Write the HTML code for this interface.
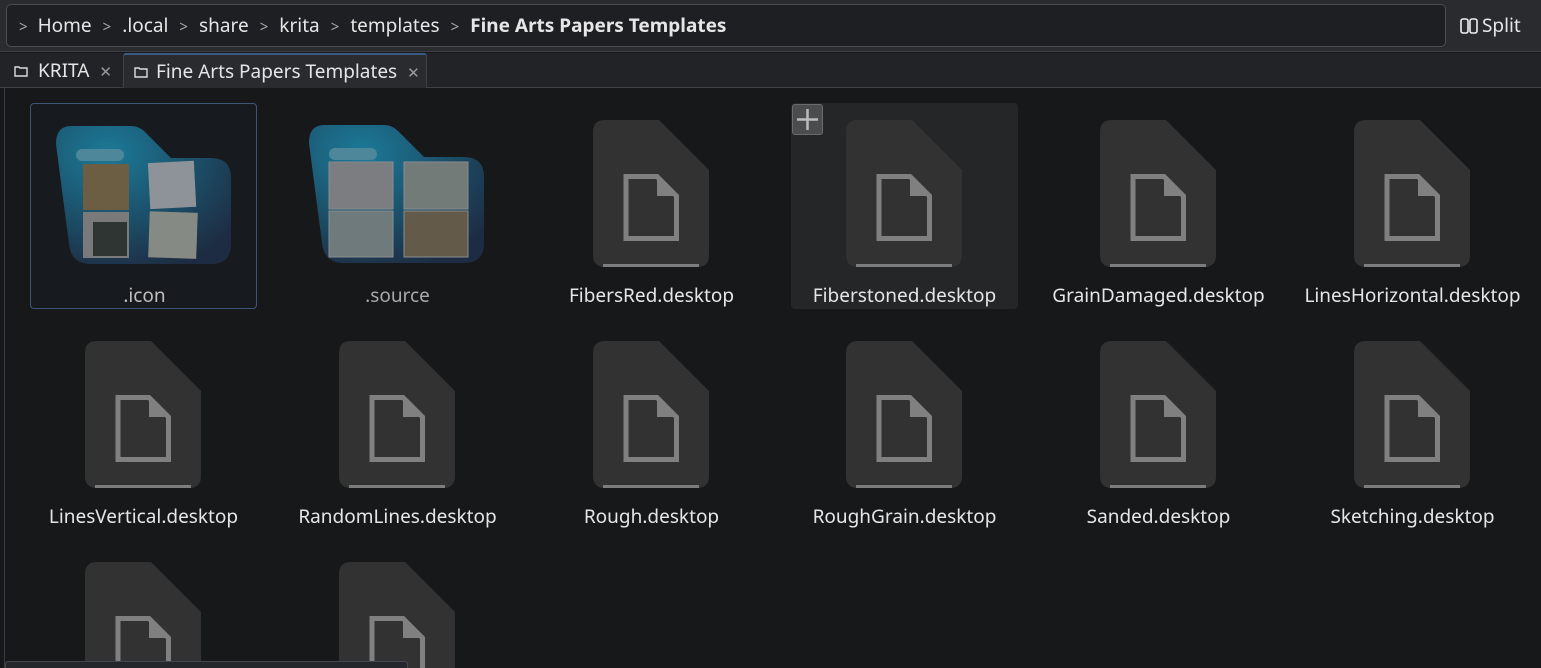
<!DOCTYPE html>
<html><head><meta charset="utf-8"><style>
*{margin:0;padding:0;box-sizing:border-box}
html{width:1541px;height:668px;overflow:hidden}
body{width:1541px;height:668px;overflow:hidden;background:#17181a;font-family:"Noto Sans","Liberation Sans",sans-serif;color:#e6e6e6;position:relative}
.top{position:absolute;left:0;top:0;width:1541px;height:52px;background:#292b2f;border-bottom:1px solid #3c3f44}
.crumb{position:absolute;left:6px;top:4px;width:1440px;height:43px;background:#1e1f22;border:1px solid #4a4d52;border-radius:5px;font-size:19px;line-height:41px;padding-left:12px;white-space:nowrap}
.crumb .s{color:#aaa;font-size:15px;margin:0 11px}
.split{position:absolute;left:1460px;top:12px;font-size:19px;line-height:26px}
.tabs{position:absolute;left:0;top:53px;width:1541px;height:35px;background:#212326;border-bottom:1px solid #3d4045}
.tab{position:absolute;top:0;height:35px;font-size:19px;line-height:34px;padding-left:14px}
.tab2{left:123px;width:304px;background:#292b2f;border:1px solid #3e4146;border-top:2px solid #3d5a85;border-bottom:none;border-radius:3px 3px 0 0;padding-left:10px;line-height:32px}
.x{color:#999;font-size:15px;margin-left:10px}
.cell{position:absolute;width:227px;height:206px}
.lbl{position:absolute;left:-20px;width:267px;top:180px;text-align:center;font-size:19px;line-height:24px;white-space:nowrap}
.doc{position:absolute;left:55px;top:17px}
</style></head><body>
<div class="top">
<div class="crumb"><span class="s" style="margin-left:0;margin-right:10px">&gt;</span>Home<span class="s">&gt;</span>.local<span class="s">&gt;</span>share<span class="s">&gt;</span>krita<span class="s">&gt;</span>templates<span class="s">&gt;</span><b>Fine Arts Papers Templates</b></div>
<div class="split"><svg width="18" height="16" style="vertical-align:-2px;margin-right:4px"><rect x="1" y="1" width="7" height="14" rx="2" fill="none" stroke="#eee" stroke-width="1.6"/><rect x="10" y="1" width="7" height="14" rx="2" fill="none" stroke="#eee" stroke-width="1.6"/></svg>Split</div>
</div>
<div class="tabs">
<div class="tab" style="left:0"><svg width="14" height="12" style="margin-right:10px"><path d="M1 2h4l1 1h7v8H1z" fill="none" stroke="#ddd" stroke-width="1.4"/></svg>KRITA<span class="x">✕</span></div>
<div class="tab tab2"><svg width="14" height="12" style="margin-right:8px"><path d="M1 2h4l1 1h7v8H1z" fill="none" stroke="#ddd" stroke-width="1.4"/></svg>Fine Arts Papers Templates<span class="x">✕</span></div>
</div>
<div style="position:absolute;left:4px;top:88px;width:1px;height:580px;background:#3a3d42"></div>

<svg width="0" height="0" style="position:absolute"><defs>
<g id="d"><path d="M12 0H66L116 50V135Q116 147 104 147H12Q0 147 0 135V12Q0 0 12 0Z" fill="#323232"/><rect x="10" y="144" width="96" height="3" fill="#7d7d7d"/><path d="M33 56.5H64L83.5 76V118.5H33Z" fill="none" stroke="#808080" stroke-width="5"/><path d="M64 54V76H86Z" fill="#808080"/></g>
</defs></svg>

<div class="cell" style="left:30px;top:103px;border:1px solid #3f5578;border-radius:4px;background:#171a1f">
<svg width="227" height="170" style="position:absolute;left:0;top:0"><defs><radialGradient id="g1" cx="0.3" cy="0.2" r="0.9"><stop offset="0" stop-color="#1b7a98"/><stop offset="1" stop-color="#1d2c42"/></radialGradient></defs>
<path d="M40 22H100Q108 22 114 28L140 54H180Q200 54 200 74V140Q200 160 180 160H60Q40 160 38 140L25 40Q25 22 40 22Z" fill="url(#g1)"/>
<rect x="45" y="45" width="48" height="12" rx="6" fill="#4d8799"/>
<rect x="52" y="60" width="46" height="46" fill="#6b5e42"/><rect x="52" y="108" width="46" height="46" fill="#7a7a7a"/><rect x="62" y="118" width="34" height="34" fill="#2f3533"/>
<rect x="118" y="58" width="46" height="46" fill="#8e9399" transform="rotate(-3 140 80)"/><rect x="118" y="108" width="48" height="46" fill="#868a85" transform="rotate(2 140 130)"/>
</svg>
<div class="lbl" style="top:179px;color:#bfbfbf">.icon</div></div>

<div class="cell" style="left:284px;top:103px">
<svg width="227" height="170" style="position:absolute;left:0;top:0"><defs><radialGradient id="g2" cx="0.3" cy="0.2" r="0.9"><stop offset="0" stop-color="#1b7a98"/><stop offset="1" stop-color="#1d2c42"/></radialGradient></defs>
<path d="M40 22H100Q108 22 114 28L140 54H180Q200 54 200 74V140Q200 160 180 160H60Q40 160 38 140L25 40Q25 22 40 22Z" fill="url(#g2)"/>
<rect x="45" y="45" width="48" height="12" rx="6" fill="#4d8799"/>
<rect x="45" y="59" width="64" height="47" fill="#7b7d80" stroke="#8a8d90"/><rect x="120" y="59" width="64" height="47" fill="#737b78" stroke="#8a8d90"/>
<rect x="45" y="108" width="64" height="46" fill="#6f7a7d" stroke="#8a8d90"/><rect x="120" y="108" width="64" height="46" fill="#635a4a" stroke="#8a8d90"/>
</svg>
<div class="lbl" style="color:#a8a8a8">.source</div></div>

<div class="cell" style="left:538px;top:103px"><svg class="doc" width="116" height="147"><use href="#d"/></svg><div class="lbl">FibersRed.desktop</div></div>
<div class="cell" style="left:791px;top:103px;background:#252628;border-radius:4px"><div style="position:absolute;left:1px;top:1px;width:31px;height:31px;background:#4b4c4e;border:1px solid #6a6b6d;border-radius:3px"><svg width="29" height="29"><path d="M14.5 4V25M4 14.5H25" stroke="#bbb" stroke-width="2.5"/></svg></div><svg class="doc" width="116" height="147"><use href="#d"/></svg><div class="lbl">Fiberstoned.desktop</div></div>
<div class="cell" style="left:1045px;top:103px"><svg class="doc" width="116" height="147"><use href="#d"/></svg><div class="lbl">GrainDamaged.desktop</div></div>
<div class="cell" style="left:1299px;top:103px"><svg class="doc" width="116" height="147"><use href="#d"/></svg><div class="lbl">LinesHorizontal.desktop</div></div>

<div class="cell" style="left:30px;top:324px"><svg class="doc" width="116" height="147"><use href="#d"/></svg><div class="lbl">LinesVertical.desktop</div></div>
<div class="cell" style="left:284px;top:324px"><svg class="doc" width="116" height="147"><use href="#d"/></svg><div class="lbl">RandomLines.desktop</div></div>
<div class="cell" style="left:538px;top:324px"><svg class="doc" width="116" height="147"><use href="#d"/></svg><div class="lbl">Rough.desktop</div></div>
<div class="cell" style="left:791px;top:324px"><svg class="doc" width="116" height="147"><use href="#d"/></svg><div class="lbl">RoughGrain.desktop</div></div>
<div class="cell" style="left:1045px;top:324px"><svg class="doc" width="116" height="147"><use href="#d"/></svg><div class="lbl">Sanded.desktop</div></div>
<div class="cell" style="left:1299px;top:324px"><svg class="doc" width="116" height="147"><use href="#d"/></svg><div class="lbl">Sketching.desktop</div></div>

<div style="position:absolute;left:0;top:545px;width:1541px;height:123px;overflow:hidden">
<div class="cell" style="left:30px;top:0;height:123px"><svg class="doc" width="116" height="106"><use href="#d"/></svg></div>
<div class="cell" style="left:284px;top:0;height:123px"><svg class="doc" width="116" height="106"><use href="#d"/></svg></div>
</div>

<div style="position:absolute;left:5px;top:661px;width:403px;height:7px;background:#24272b;border:1px solid #44474c;border-bottom:none;border-radius:3px 3px 0 0"></div>
</body></html>
